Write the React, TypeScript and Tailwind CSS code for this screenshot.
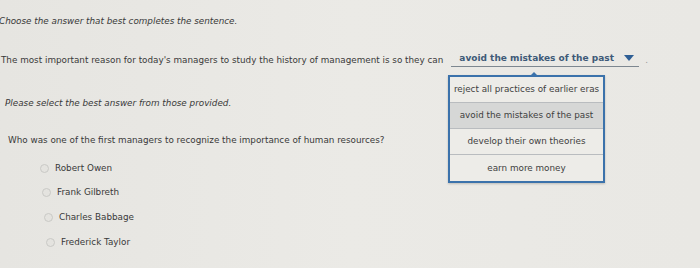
import React from 'react';

const options = ['reject all practices of earlier eras', 'avoid the mistakes of the past', 'develop their own theories', 'earn more money'];

const people = [
    { name: 'Robert Owen', ml: 'ml-[40px]' },
    { name: 'Frank Gilbreth', ml: 'ml-[42px]' },
    { name: 'Charles Babbage', ml: 'ml-[44px]' },
    { name: 'Frederick Taylor', ml: 'ml-[46px]' },
];

const App: React.FC = () => {
    return (
        <div className="w-[700px] h-[268px] overflow-hidden bg-gradient-to-r from-[#e6e5e1] via-[#ebeae6] to-[#e9e8e4] text-[#393939] text-[8.8px] font-['DejaVu_Sans',Verdana,sans-serif]">
            <div className="pt-[15px] -ml-[1px] italic">Choose the answer that best completes the sentence.</div>

            <div className="relative mt-[25px] ml-[1px] flex items-end h-[14px]">
                <span>The most important reason for today's managers to study the history of management is so they can</span>
                <div className="ml-[8px] w-[188px] border-b border-[#7d8790] flex items-center pl-[8px] pr-[5px] pb-[1px]">
                    <span className="font-bold text-[#3e5a78] text-[9px]">avoid the mistakes of the past</span>
                    <svg className="ml-auto" width="10" height="6" viewBox="0 0 10 6"><path d="M0 0 L10 0 L5 6 Z" fill="#2f5f95" /></svg>
                </div>
                <span className="ml-[6px] text-[#999]">.</span>

                {/* dropdown menu */}
                <div className="absolute left-[447px] top-[22px] w-[157px] border-2 border-[#3b72ab] bg-[#eceae6] shadow-[0_1px_2px_rgba(0,0,0,0.2)]">
                    <div className="absolute -top-[5px] left-[79px] w-0 h-0 border-l-[5px] border-r-[5px] border-b-[5px] border-l-transparent border-r-transparent border-b-[#3b72ab]" />
                    {options.map((o, i) => (
                        <div key={o}
                            className={`h-[26px] flex items-center justify-center border-b border-[#b9bcbf] last:border-b-0 ${i === 1 ? 'bg-[#d6d7d6]' : 'bg-[#edece8]'}`}>
                            <span className="text-[#404040]">{o}</span>
                        </div>
                    ))}
                </div>
            </div>

            <div className="mt-[30px] ml-[5px] italic">Please select the best answer from those provided.</div>

            <div className="mt-[24px] ml-[8px]">Who was one of the first managers to recognize the importance of human resources?</div>

            <div className="mt-[14px] flex flex-col gap-[11.5px]">
                {people.map(p => (
                    <div key={p.name} className={`flex items-center ${p.ml}`}>
                        <span className="w-[9px] h-[9px] rounded-full border border-[#c9c9c6] bg-[#e4e3df]" />
                        <span className="ml-[6px]">{p.name}</span>
                    </div>
                ))}
            </div>
        </div>
    );
};

export default App;
